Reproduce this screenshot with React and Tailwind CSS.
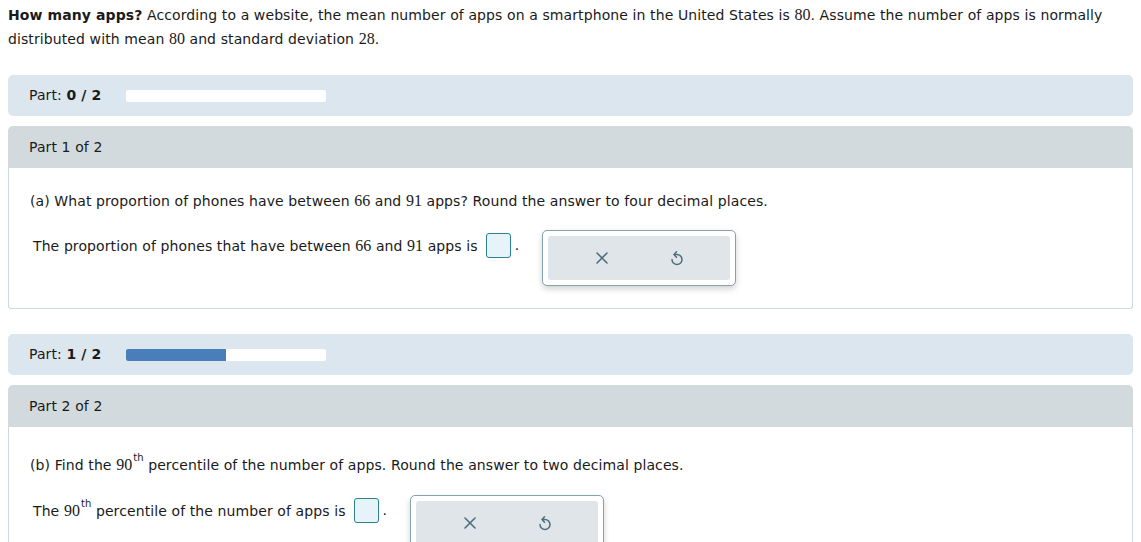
import React from 'react';

const N = ({ children }) => (
  <span
    className="text-[16px] tracking-normal"
    style={{ fontFamily: "'Liberation Serif', 'Times New Roman', 'DejaVu Serif', serif" }}
  >
    {children}
  </span>
);

const Th = () => (
  <span className="relative -top-[9px] text-[10px] ml-[1px]">th</span>
);

const XIcon = () => (
  <svg width="14" height="14" viewBox="0 0 14 14" fill="none" stroke="#4d6f7b" strokeWidth="1.6" strokeLinecap="round">
    <path d="M2 2 L12 12 M12 2 L2 12" />
  </svg>
);

const RedoIcon = () => (
  <svg width="14" height="16" viewBox="0 0 14 16" fill="none" stroke="#4d6f7b" strokeWidth="1.5" strokeLinecap="round" strokeLinejoin="round">
    <path d="M4.5 4.5 H7 A5 5 0 1 1 2 9.5" />
    <path d="M6.5 1.8 L4 4.5 L6.5 7.2" />
  </svg>
);

const AnswerBox = () => (
  <span className="inline-block shrink-0 w-[25px] h-[25px] bg-[#e6f4f9] border border-[#2a8192] rounded-[3px] ml-[8px] mr-[4px] mt-[3px]" />
);

const Tools = () => (
  <div className="shrink-0 ml-[23px] w-[194px] p-[5px] border border-[#86a2ab] rounded-[5px] bg-white shadow-[0_3px_6px_rgba(0,0,0,0.18)]">
    <div className="flex items-center justify-around h-[44px] bg-[#dfe5e8] rounded-[3px] px-4">
      <XIcon />
      <RedoIcon />
    </div>
  </div>
);

const ProgressBar = ({ done }) => (
  <div className="flex items-center h-[41px] rounded-[5px] bg-[#dbe6ef] px-[21px]">
    <span className="w-[97px]">Part: <b>{done}&nbsp;/&nbsp;2</b></span>
    <div className="w-[200px] h-[12px] bg-white rounded-[2px] overflow-hidden">
      <div className="h-full bg-[#4a7ebb]" style={{ width: `${(done / 2) * 100}%` }} />
    </div>
  </div>
);

const PartCard = ({ title, children }) => (
  <div className="rounded-t-[5px] overflow-hidden">
    <div className="h-[42px] flex items-center px-[21px] bg-[#d2dadd]">{title}</div>
    <div className="border border-t-0 border-[#cfd8dc] rounded-b-[3px] px-[21px]">{children}</div>
  </div>
);

export default function App() {
  return (
    <div
      className="bg-white text-[#1a1a1a] text-[14px] tracking-[0.1px] px-[8px] pt-[3px] w-[1141px] h-[542px] overflow-hidden font-['Verdana','DejaVu_Sans',sans-serif]"
    >
      <p className="leading-[23px]">
        <b>How many apps?</b> According to a website, the mean number of apps on a smartphone in the United States is <N>80</N>. Assume the number of apps is normally distributed with mean <N>80</N> and standard deviation <N>28</N>.
      </p>

      <div className="mt-[24px]">
        <ProgressBar done={0} />
      </div>

      <div className="mt-[10px]">
        <PartCard title="Part 1 of 2">
          <p className="pt-[21px] leading-[23px]">
            (a) What proportion of phones have between <N>66</N> and <N>91</N> apps? Round the answer to four decimal places.
          </p>
          <div className="mt-[17px] pl-[3px] pb-[22px] flex items-start">
            <span className="mt-[3px] leading-[25px]">The proportion of phones that have between <N>66</N> and <N>91</N> apps is</span>
            <AnswerBox />
            <span className="mt-[3px] leading-[25px]">.</span>
            <Tools />
          </div>
        </PartCard>
      </div>

      <div className="mt-[25px]">
        <ProgressBar done={1} />
      </div>

      <div className="mt-[10px]">
        <PartCard title="Part 2 of 2">
          <p className="pt-[26px] leading-[23px]">
            (b) Find the <N>90</N><Th /> percentile of the number of apps. Round the answer to two decimal places.
          </p>
          <div className="mt-[17px] pl-[3px] pb-[22px] flex items-start">
            <span className="mt-[3px] leading-[25px]">The <N>90</N><Th /> percentile of the number of apps is</span>
            <AnswerBox />
            <span className="mt-[3px] leading-[25px]">.</span>
            <Tools />
          </div>
        </PartCard>
      </div>
    </div>
  );
}
